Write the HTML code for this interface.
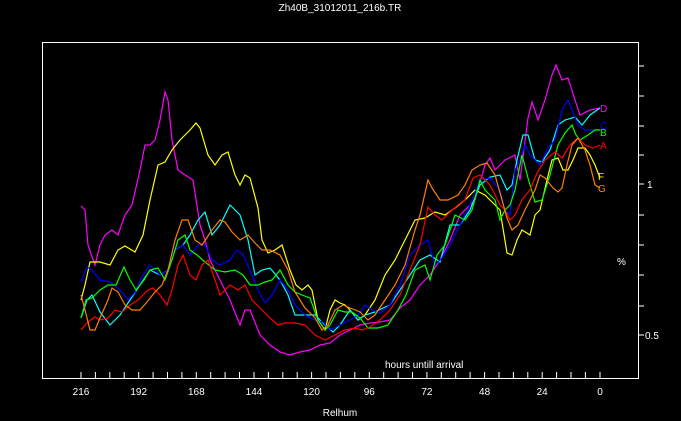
<!DOCTYPE html>
<html><head><style>
html,body{margin:0;padding:0;background:#000;width:681px;height:421px;overflow:hidden}
svg{display:block}
text{font-family:"Liberation Sans",sans-serif;fill:#fff;font-size:10px}
polyline{fill:none;stroke-width:1.2}
</style></head><body>
<svg width="681" height="421" viewBox="0 0 681 421">
<text x="340" y="11" text-anchor="middle">Zh40B_31012011_216b.TR</text>
<rect x="42.5" y="42.5" width="596" height="336" fill="none" stroke="#fff" stroke-width="1"/>
<g stroke="#fff" stroke-width="1">
<path d="M639 66h5M639 96h5M639 126h5M639 155h5M639 184h5M639 215h5M639 245h5M639 275h5M639 306h5M639 335h5"/>
<path d="M81 378v-6M95.4 378v-6M109.8 378v-6M124.2 378v-6M138.7 378v-6M153.1 378v-6M167.5 378v-6M181.9 378v-6M196.3 378v-6M210.7 378v-6M225.1 378v-6M239.5 378v-6M254 378v-6M268.4 378v-6M282.8 378v-6M297.2 378v-6M311.6 378v-6M326 378v-6M340.4 378v-6M354.8 378v-6M369.3 378v-6M383.7 378v-6M398.1 378v-6M412.5 378v-6M426.9 378v-6M441.3 378v-6M455.7 378v-6M470.1 378v-6M484.6 378v-6M499 378v-6M513.4 378v-6M527.8 378v-6M542.2 378v-6M556.6 378v-6M571 378v-6M585.4 378v-6M600 378v-6"/>
</g>
<text x="647" y="188">1</text>
<text x="645" y="339">0.5</text>
<text x="617" y="265" font-size="9">%</text>
<g text-anchor="middle">
<text x="81" y="395">216</text><text x="138.7" y="395">192</text><text x="196.3" y="395">168</text><text x="254" y="395">144</text><text x="311.6" y="395">120</text><text x="369.3" y="395">96</text><text x="426.9" y="395">72</text><text x="484.6" y="395">48</text><text x="542.2" y="395">24</text><text x="600" y="395">0</text>
<text x="340" y="416">Relhum</text>
</g>
<text x="385" y="368">hours untill arrival</text>

<polyline stroke="#ff00ff" points="81,206 85,210 88,245 95,265 100,245 105,235 112,230 118,235 125,215 132,205 140,170 145,145 150,145 155,140 160,120 165,92 168,100 172,140 178,170 185,175 193,180 200,225 205,240 210,260 220,280 230,300 240,325 245,310 250,310 260,335 270,345 280,352 290,355 300,352 310,350 320,345 330,343 340,335 350,330 360,325 370,323 380,322 390,320 400,308 410,300 420,285 430,275 440,260 450,240 460,215 475,200 485,165 490,158 495,170 505,160 515,155 520,180 528,118 532,102 538,120 545,100 552,75 556,65 562,80 568,78 575,100 580,115 590,110 600,108"/>
<polyline stroke="#ffff00" points="81,300 85,285 90,262 100,262 110,265 118,250 125,246 135,252 143,235 150,200 158,165 165,162 172,150 180,140 190,130 196,123 200,128 208,155 215,165 222,155 228,152 235,175 240,185 245,175 250,178 258,208 262,240 268,253 275,250 282,245 290,270 296,285 302,290 308,285 312,290 318,320 325,330 330,310 335,300 340,303 345,305 350,310 358,320 365,315 375,300 385,275 395,260 405,240 415,220 425,218 435,212 445,215 455,208 465,200 475,190 485,195 490,200 495,205 500,210 507,253 512,255 517,240 522,230 530,235 535,215 540,210 547,180 552,160 558,158 563,170 568,170 573,160 578,148 585,148 590,155 595,165 600,178"/>
<polyline stroke="#00ffff" points="81,318 87,300 92,295 100,312 110,325 120,315 130,300 140,285 150,270 160,275 168,270 175,250 183,245 190,235 198,220 205,212 212,235 220,225 230,205 240,215 248,240 255,275 262,270 270,268 280,280 288,295 295,315 305,315 315,315 325,325 333,332 340,325 350,310 358,320 365,315 375,312 383,308 390,305 400,290 410,275 420,260 430,255 440,262 450,225 460,225 470,210 480,185 490,177 500,175 507,190 512,185 517,160 523,135 528,135 535,160 542,162 550,150 558,125 565,120 575,117 582,125 590,115 600,108"/>
<polyline stroke="#0000ff" points="81,282 87,267 92,270 100,280 110,282 120,290 128,300 135,292 143,275 150,265 160,275 168,270 175,250 183,245 190,255 198,245 205,245 212,260 220,265 230,260 237,250 243,255 250,270 258,290 265,303 272,295 280,280 288,290 295,305 305,315 315,320 323,322 330,330 340,325 350,320 358,315 365,305 372,310 380,313 390,305 400,285 410,255 420,245 428,240 435,265 442,258 450,245 460,225 470,205 480,180 490,178 500,190 505,210 510,215 515,170 520,160 525,145 530,155 540,165 548,148 555,140 562,110 568,100 572,110 578,125 585,130 592,130 600,130"/>
<polyline stroke="#00ff00" points="81,318 86,300 92,298 100,290 108,285 116,285 124,267 130,280 136,290 144,280 150,270 158,268 165,280 172,260 178,240 185,235 190,250 197,255 205,262 215,270 225,272 235,270 243,275 250,285 258,285 265,282 272,280 280,270 288,285 295,292 302,295 310,298 318,320 325,330 330,325 338,310 345,312 352,312 360,318 368,328 378,328 388,325 398,310 406,295 415,270 425,265 430,280 437,255 445,245 455,215 465,220 472,210 480,180 485,190 495,200 500,220 505,210 510,205 515,190 522,155 528,178 535,202 542,200 550,175 558,145 565,133 572,125 576,135 580,140 588,135 595,130 600,130"/>
<polyline stroke="#ff0000" points="81,330 88,322 95,317 100,320 108,318 115,310 122,312 130,305 138,300 148,290 153,288 160,295 167,305 172,290 178,265 183,255 190,275 196,280 202,265 208,260 215,280 220,295 230,285 238,290 245,285 252,300 260,308 270,318 278,325 285,323 295,323 305,325 315,335 325,340 335,335 345,330 355,328 362,330 370,327 380,320 390,310 400,295 410,270 420,245 428,207 435,215 442,220 450,212 458,205 465,200 473,178 480,175 490,185 500,205 505,210 510,220 515,215 522,200 530,190 537,173 545,160 555,152 562,158 570,145 578,138 585,145 593,148 600,145"/>
<polyline stroke="#ff8000" points="81,295 85,310 90,330 95,330 100,318 108,300 112,288 118,292 125,305 132,310 140,310 147,302 155,292 162,285 168,270 175,240 182,220 188,220 195,240 202,245 212,230 220,220 225,222 232,232 240,240 248,235 255,243 262,250 270,250 280,255 288,270 295,292 305,308 315,318 322,330 328,325 335,310 343,305 350,308 360,312 368,320 375,315 385,300 395,285 405,265 415,230 420,215 428,180 432,188 440,200 448,200 458,195 465,185 472,170 480,165 487,163 495,175 502,200 507,218 512,230 518,225 525,210 535,190 540,175 545,178 553,188 558,192 562,188 567,165 572,145 578,138 585,150 590,165 595,185 600,188"/>
<text x="600" y="112" style="fill:#ff00ff">D</text>
<text x="600" y="129" style="fill:#0000ff">C</text>
<text x="600" y="136" style="fill:#00ff00">B</text>
<text x="600" y="149" style="fill:#ff0000">A</text>
<text x="598" y="180" style="fill:#ffff00">F</text>
<text x="598" y="192" style="fill:#ff8000">G</text>
</svg>
</body></html>
